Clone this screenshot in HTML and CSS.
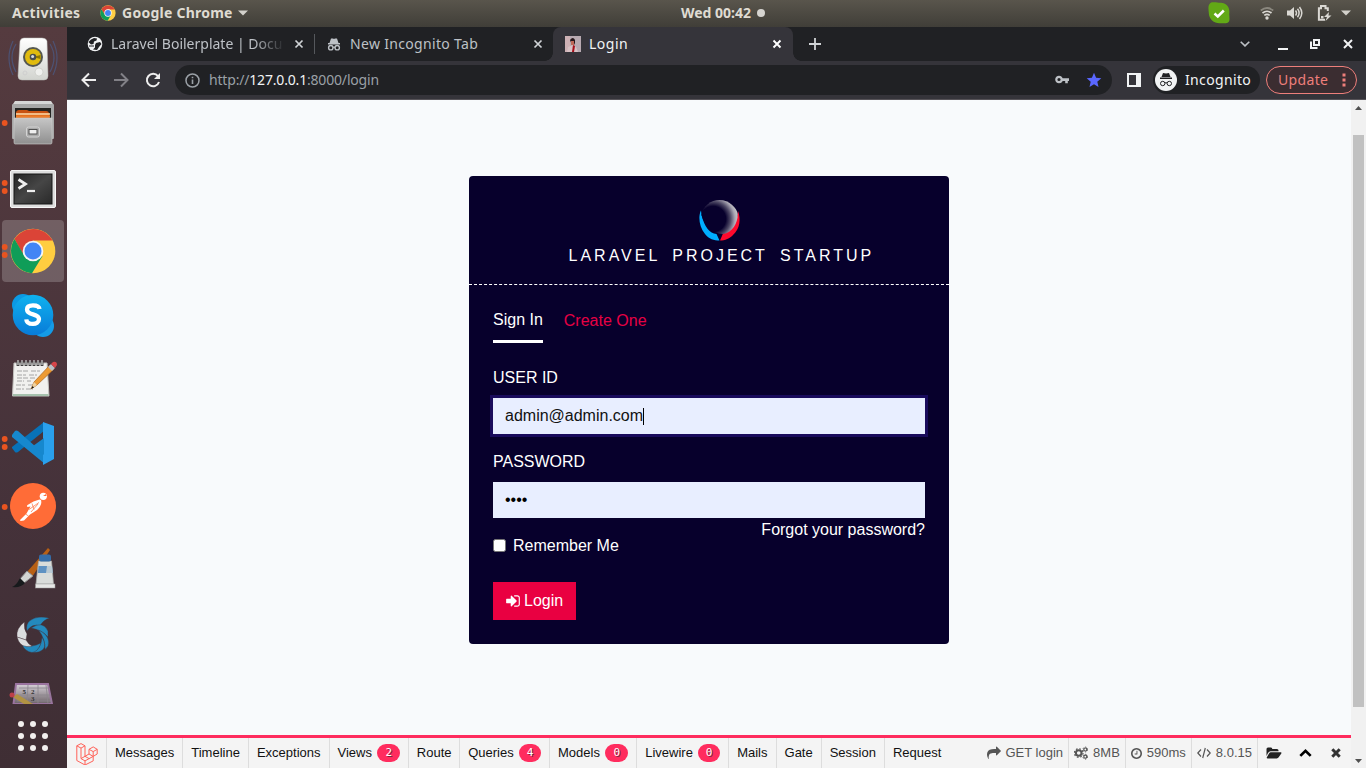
FILE: index.html
```html
<!DOCTYPE html>
<html lang="en">
<head>
<meta charset="utf-8">
<title>Login</title>
<link rel="stylesheet" href="styles.css">
</head>
<body>
<div class="desktop">
  <header class="topbar">
    <div class="top-left">
      <span class="activities">Activities</span>
      <svg class="mini-chrome" width="16" height="16" viewBox="0 0 46 46"><circle cx="23" cy="23" r="22" fill="#ffce44"/><path d="M4 12A22 22 0 0 1 42 12L42.500 13H23L14 28Z" fill="#db4437"/><path d="M4 12A22 22 0 0 0 22 45L32 28H14Z" fill="#0f9d58"/><circle cx="23" cy="23" r="10.500" fill="#fff"/><circle cx="23" cy="23" r="8.500" fill="#4285f4"/></svg>
      <span class="app-name">Google Chrome</span>
      <svg width="10" height="6" viewBox="0 0 10 6"><path d="M0 .5h10L5 5.500Z" fill="#d3d1cb"/></svg>
    </div>
    <div class="clock">Wed 00:42<i class="notice-dot"></i></div>
    <div class="tray">
      <svg width="22" height="22" viewBox="0 0 22 22"><path d="M3 .5C7-.5 10 1 13 .8 18 1 22 5 21.300 11c-.3 3 .8 6-.3 8.500-2 2.500-5 1.500-8 1.700C7 22 1 18 .8 11 .5 7-.5 3 3 .5Z" fill="#62a916"/><path d="m6.500 11.500 3.300 3 6-6" fill="none" stroke="#fff" stroke-width="2.500"/></svg>
      <svg class="wifi" width="14" height="14" viewBox="0 0 14 14" fill="none" stroke="#dad8d3" stroke-width="1.700"><path d="M.8 4.500q6.200-5 12.400 0" stroke="#8a877e"/><path d="M2.500 7q4.500-3.500 9 0M4.300 9.400q2.700-2.100 5.400 0"/><circle cx="7" cy="12" r="1.700" fill="#dad8d3" stroke="none"/></svg>
      <svg class="volume" width="16" height="14" viewBox="0 0 16 14" fill="none" stroke="#dad8d3" stroke-width="1.500"><path d="M0 4.500h3L7 1v12L3 9.500H0Z" fill="#dad8d3" stroke="none"/><path d="M8.500 4.500q2 2.500 0 5M10.500 2.800q3.200 4.200 0 8.400M12.500 1q4.600 6 0 12"/></svg>
      <svg class="battery" width="15" height="16" viewBox="0 0 15 16"><path d="M8 14.800H1.900V3.200H4V1h4.500v2.200h2.300V6" fill="none" stroke="#dad8d3" stroke-width="2"/><path d="M4 11h2.500v2.500H4Z" fill="#dad8d3"/><path d="m12 7-5 5h3l-1.500 4 6-5.500h-3Z" fill="#dad8d3"/></svg>
      <svg class="menu-arrow" width="10" height="6" viewBox="0 0 10 6"><path d="M0 .5h10L5 5.500Z" fill="#d3d1cb"/></svg>
    </div>
  </header>

  <div class="workspace">
    <nav class="dock">
      <div class="dock-list">
        <svg viewBox="0 0 67 64"><defs><linearGradient id="sp" x2="0" y2="1"><stop stop-color="#fff"/><stop offset="1" stop-color="#d2d4cf"/></linearGradient><linearGradient id="cab" x2="0" y2="1"><stop stop-color="#c6c6c6"/><stop offset="1" stop-color="#8f8f8f"/></linearGradient><linearGradient id="term" x2="1" y2="1"><stop stop-color="#252525"/><stop offset=".5" stop-color="#464646"/><stop offset="1" stop-color="#292929"/></linearGradient><linearGradient id="sky" x2="0" y2="1"><stop stop-color="#0fb2ef"/><stop offset="1" stop-color="#087bd8"/></linearGradient></defs>
          <g fill="none" stroke="#4d5273" stroke-width="1.200"><path d="M16 17q-8 13 0 28M13 14q-8 17 0 34M50 17q8 13 0 28M53 14q8 17 0 34"/></g>
          <path d="M20 14q1-3 4-3h18q4 0 5 3l1 35q0 4-4 4H22q-4 0-4-4Z" fill="url(#sp)" stroke="#bbbdb9" stroke-width=".5"/><circle cx="33" cy="30" r="10" fill="#555850"/><circle cx="33" cy="30" r="8" fill="#e0bb0e"/><path d="m33 30 7.500-2v4Z" fill="#8e7600"/><circle cx="33" cy="30" r="3.300" fill="#494d50"/><circle cx="32.600" cy="29.500" r="1.500" fill="#d8dde0"/><circle cx="39" cy="45" r="4" fill="#eff0ed" stroke="#c4c6c0" stroke-width=".6"/><circle cx="25" cy="46" r="2" fill="none" stroke="#cfcfcf"/></svg>
        <svg viewBox="0 0 67 64"><path d="M13 13 15 10h36l2 3Z" fill="#d6d6d6"/><rect x="12" y="13" width="42" height="35" rx="1" fill="#a7a7a7"/><rect x="15" y="17" width="36" height="10" fill="#242422"/><path d="M16 21q1-2 3-2h8l2 1h17q3 0 3 3v4H16Z" fill="#c85212"/><path d="M16 23h34" stroke="#ffe1af" stroke-width="1.500"/><path d="M16 25.500h34" stroke="#ed7d29" stroke-width="2.500"/><path d="M14 27h38v24q0 2-1 2H15q-1 0-1-2Z" fill="url(#cab)" stroke="#d0d0d0" stroke-width=".6"/><rect x="26.500" y="36" width="13" height="10" rx="2" fill="#aaa" stroke="#d3d3d3"/><rect x="29" y="38.500" width="8" height="4.500" fill="#eee" stroke="#515151"/><circle cx="4.700" cy="32" r="2.900" fill="#e95420"/></svg>
        <svg viewBox="0 0 67 64"><rect x="10.500" y="15.500" width="45" height="37" rx="1.500" fill="#dedede" stroke="#f7f7f7"/><rect x="14" y="19" width="38" height="30" fill="url(#term)" stroke="#161616"/><path d="m18.500 24.500 7 4.500-7 4.500" fill="none" stroke="#eee" stroke-width="2.700"/><path d="M27 36h8" stroke="#eee" stroke-width="2.200"/><g fill="#e95420"><circle cx="4.700" cy="28" r="2.900"/><circle cx="4.700" cy="36" r="2.900"/></g></svg>
        <svg viewBox="0 0 67 64"><rect x="2" y="1" width="62" height="62" rx="4" fill="#fff" fill-opacity=".2"/><circle cx="33" cy="32" r="22.300" fill="#ffcd40"/><path d="M14.500 20A22.300 22.300 0 0 1 52.600 21.500H33L24.500 38Z" fill="#db4437"/><path d="M14.500 20A22.300 22.300 0 0 0 32 54.200L42.500 37 25 38Z" fill="#0f9d58"/><circle cx="33" cy="32" r="10.300" fill="#f5f5f5"/><circle cx="33" cy="32" r="8.500" fill="#4285f4"/><g fill="#e95420"><circle cx="4.700" cy="28" r="2.900"/><circle cx="4.700" cy="36" r="2.900"/></g></svg>
        <svg viewBox="0 0 67 64"><circle cx="23" cy="22" r="11" fill="#0b9ae4"/><circle cx="43" cy="43" r="11" fill="#149be6"/><circle cx="33" cy="32" r="20.300" fill="url(#sky)"/><path d="M39.500 26c-.3-2.500-3.300-3.700-6.500-3.700-4 0-6 1.700-6 4.200 0 6.300 12 3.400 12 9.600 0 3.200-3 4.800-6 4.800-3.800 0-6.500-1.400-6.700-4.600" fill="none" stroke="#fff" stroke-width="4.300"/></svg>
        <svg viewBox="0 0 67 64"><path d="M14 16h33l2 33H12.500Z" fill="#f1f1ef" stroke="#c1c1bd"/><path d="M13 47h35.500v2H13Z" fill="#a6c1ad"/><g stroke="#a4a4a4" stroke-width="1"><path d="M17 24h12m2 0h9M17 28h9m3 0h8M17 31h11m2 0h5M17 34h7m3 0h4M16 38h9m3 0h5M16 42h8m2 0h7" stroke-dasharray="5 1"/></g><path d="M18 19v-5M22 19v-5M26 19v-5M30 19v-5M34 19v-5M38 19v-5M42 19v-5" stroke="#3f3f3f" stroke-width="2.800"/><path d="M18 18v-5M22 18v-5M26 18v-5M30 18v-5M34 18v-5M38 18v-5M42 18v-5" stroke="#eee"/><path d="m31 42 3-7L50 18l4 4-17 16Z" fill="#ed9b34" stroke="#aa651c" stroke-width=".7"/><path d="m31 42 3-7 3 3Z" fill="#eed2a1"/><path d="m31 42 1.500-3 1.500 1.500Z" fill="#111"/><path d="m48 20 3-3 4 4-3 3Z" fill="#b8bfc5"/><path d="m51 17 2-2q4-1 4 3l-2 3Z" fill="#d64549"/></svg>
        <svg viewBox="0 0 67 64"><path d="m12 37 3 4q1 1 3 0L44 20V11L12 36Z" fill="#0872b8"/><path d="M12 24l3-4q1-1 3 0l27 24v9L12 26Z" fill="#1688ce"/><path d="m43 11 11 4v33l-11 6Z" fill="#2aa0ec"/><path d="M33 35l11 9V27Z" fill="#1688ce"/><g fill="#e95420"><circle cx="4.700" cy="28" r="2.900"/><circle cx="4.700" cy="36" r="2.900"/></g></svg>
        <svg viewBox="0 0 67 64"><circle cx="33" cy="31" r="23" fill="#ff6c37"/><circle cx="43.300" cy="21.300" r="3.600" fill="#fff"/><path d="m43 21 3-2 .5 2Z" fill="#ff6c37"/><path d="M39.500 24.500q-6 1-12 5.500-1 1 0 2l3-.5-4 7-6.500 6.500.5 1 3.500-.5 6-6 4-2.500q4-2 6-5.500 2-3 1-6.500Z" fill="#fff"/><path d="m29 34.500 10-7M31 37l7-8M32 28.500l2 6M25.500 39l3 2" fill="none" stroke="#ff6c37" stroke-width=".7"/><circle cx="4.700" cy="32" r="2.900" fill="#e95420"/></svg>
        <svg viewBox="0 0 67 64"><path d="m27 33 21-24 2 2-18 27Z" fill="#b86014"/><path d="m20 40 7-8 6 5-9 7Z" fill="#d3d5d2" stroke="#8c8c8c"/><path d="m20 39 5 5q-4 5-13 4 4-1 8-9Z" fill="#171a1c"/><path d="M38.500 22h13l2 23H36Z" fill="#d9dcda" stroke="#a7aaa8" stroke-width=".7"/><rect x="39" y="15.500" width="12" height="7" rx="2" fill="#356da8"/><path d="M38.500 27h13.500l.7 7H38Z" fill="#5e91c2"/><path d="m47 27 5 0 .7 7h-6.700Z" fill="#b9c9d3"/><rect x="35.500" y="45" width="19.500" height="4" fill="#e6e7e6" stroke="#9a9a9a" stroke-width=".5"/></svg>
        <svg viewBox="0 0 67 64"><g fill="#2389bd" stroke="#433037" stroke-width=".4"><path d="M27 28Q25.500 21 30 17.500 38 12 49.500 15.300 43 17 40 23q-8-3-13 5Z"/><path d="M31 25q12-8 17 3v6q-6-7-17-9Z"/><path d="M38.500 27q9 4 10 11 1 5-3.500 8.500.5-10-6.500-19.500Z"/><path d="M42 34q4.500 8 1.500 12-4 4-11 3.500 9-4 9.500-15.500Z"/><path d="M41 40q-3 9-9 9.500-7-1-10-8 9 4 19-1.500Z"/></g><g fill="#dcdedf" stroke="#433037" stroke-width=".4"><path d="M24.500 19q-1 7 2.500 12l-1 6-9-3q-1-9 7.500-15Z"/><path d="M17 34 26 37q2 4 6 6-12 3-15-9Z"/></g></svg>
        <svg viewBox="0 0 67 64"><defs><linearGradient id="fade" x2="0" y2="1"><stop stop-color="#d6d0d7"/><stop offset="1" stop-color="#6c6268"/></linearGradient></defs><path d="M16 17h32l4 20H13.500Z" fill="url(#fade)" stroke="#9a739f" stroke-width="2"/><path d="M19 21h30M18 28h33M17 34h35M28 18l-1 19M38 18v19M46 18l2 19" stroke="#8c858d" fill="none" stroke-width=".8"/><g class="dock-digits"><text x="22.500" y="27">5</text><text x="31" y="27">2</text><text x="31" y="33.500">3</text></g><path d="m13 30 4-3 16 10H24Z" fill="#b19343"/><circle cx="12" cy="28" r="2.500" fill="#bd4048"/></svg>
      </div>
      <svg class="apps-grid" viewBox="0 0 67 64"><g fill="#f2f0ef"><circle cx="21" cy="20" r="3"/><circle cx="33" cy="20" r="3"/><circle cx="45" cy="20" r="3"/><circle cx="21" cy="32" r="3"/><circle cx="33" cy="32" r="3"/><circle cx="45" cy="32" r="3"/><circle cx="21" cy="44" r="3"/><circle cx="33" cy="44" r="3"/><circle cx="45" cy="44" r="3"/></g></svg>
    </nav>

    <section class="browser">
      <div class="tabs">
        <div class="tab tab-docs">
          <svg width="16" height="16" viewBox="0 0 16 16"><circle cx="8" cy="8" r="7.300" fill="#f1f3f4"/><path d="M4 3.500 7 2l3 .5-.5 2L7 5.500 6.500 8 4 8.500 1.500 6ZM9 7l4-1 1.500 2L12 11l-2 3-4-.5 2-2V9Z" fill="#202124"/><path d="M2 10h5" stroke="#202124"/></svg>
          <span class="tab-title fading">Laravel Boilerplate | Docu</span>
          <svg class="close" width="10" height="10" viewBox="0 0 10 10"><path d="m1.500 1.500 7 7m0-7-7 7"/></svg>
        </div>
        <div class="tab tab-incognito">
          <svg width="14" height="14" viewBox="0 0 14 14"><path d="M4 1.500h2l1 .5 1-.5h2L11.500 6h-9ZM1 6h12v1.500H1Z" fill="#bdc1c6"/><g fill="none" stroke="#bdc1c6" stroke-width="1.400"><circle cx="3.800" cy="10.700" r="2.200"/><circle cx="10.200" cy="10.700" r="2.200"/><path d="M6 10.500q1-.7 2 0"/></g></svg>
          <span class="tab-title">New Incognito Tab</span>
          <svg class="close" width="10" height="10" viewBox="0 0 10 10"><path d="m1.500 1.500 7 7m0-7-7 7"/></svg>
        </div>
        <div class="tab tab-active">
          <svg width="16" height="16" viewBox="0 0 16 16"><path d="M0 0h16v16H0Z" fill="#b8aab1"/><path d="M0 0h5v16H0Z" fill="#ceb1b5"/><path d="M5 4q3-4 5 0v3l-1 2H7Z" fill="#27171b"/><path d="M6 5h3v4H6Z" fill="#bd6857"/><path d="m3 11 5-2 3 2 2 5H2Z" fill="#d8c1c4"/><path d="m8 9 2 1-1 6H7Z" fill="#a50e19"/></svg>
          <span class="tab-title">Login</span>
          <svg class="close" width="10" height="10" viewBox="0 0 10 10"><path d="m1.500 1.500 7 7m0-7-7 7"/></svg>
        </div>
        <svg class="new-tab" width="12" height="12" viewBox="0 0 12 12"><path d="M6 0v12M0 6h12"/></svg>
        <div class="window-controls">
          <svg width="10" height="6" viewBox="0 0 10 6"><path d="m.7.700 4.300 4.200L9.300.700" stroke="#bdc1c6" stroke-width="1.600"/></svg>
          <svg class="minimize" width="10" height="2" viewBox="0 0 10 2"><path d="M0 1h10" stroke-width="2"/></svg>
          <svg class="restore" width="10" height="10" viewBox="0 0 10 10"><path d="M4 1h5v5H4ZM1 2.500V9h6.500" stroke-width="2"/></svg>
          <svg class="win-close" width="10" height="10" viewBox="0 0 10 10"><path d="m1 1 8 8m0-8-8 8" stroke-width="2"/></svg>
        </div>
      </div>

      <div class="toolbar">
        <div class="nav-icons">
          <svg width="16" height="16" viewBox="0 0 16 16"><path d="M15 8H2m6-6.500L1.500 8 8 14.500"/></svg>
          <svg class="dim" width="16" height="16" viewBox="0 0 16 16"><path d="M1 8h13M8 1.500 14.500 8 8 14.500"/></svg>
          <svg width="16" height="16" viewBox="0 0 16 16"><path d="M13 4.200A6.200 6.200 0 1 0 14 10"/><path d="M15 1v6H9Z" fill="#eee" stroke="none"/></svg>
        </div>
        <div class="omnibox">
          <svg width="15" height="15" viewBox="0 0 15 15"><circle cx="7.500" cy="7.500" r="6.500" fill="none" stroke="#9aa0a6" stroke-width="1.500"/><path d="M7.500 6.500v4.500M7.500 3.800v1.500" stroke="#9aa0a6" stroke-width="1.600"/></svg>
          <span class="url">http://<b>127.0.0.1</b>:8000/login</span>
          <svg class="key" width="14" height="10" viewBox="0 0 14 10"><circle cx="4" cy="4.500" r="2.700" fill="none" stroke="#bdc1c6" stroke-width="2.200"/><path d="M7 3.200h7v2.700h-1.200v2.300h-2.600V5.900H7Z" fill="#bdc1c6"/></svg>
          <svg class="star" width="16" height="16" viewBox="0 0 16 16"><path d="m8 .8 2.100 4.900 5.200.5-4 3.500 1.200 5.200L8 12.200l-4.500 2.700 1.200-5.200-4-3.500 5.200-.5Z" fill="#5a67ff"/></svg>
        </div>
        <svg class="side-panel" width="14" height="14" viewBox="0 0 14 14"><path d="M0 0h14v14H0Z" fill="#f1f3f4"/><path d="M2 2h7v10H2Z" fill="#35343a"/></svg>
        <div class="incognito">
          <svg width="22" height="22" viewBox="0 0 22 22"><circle cx="11" cy="11" r="11" fill="#f1f3f4"/><path d="m8 4 3 .6L14 4l1.500 4h-9ZM5 8.500h12V10H5Z" fill="#202124"/><g fill="none" stroke="#202124"><circle cx="7.700" cy="14.500" r="2.200"/><circle cx="14.300" cy="14.500" r="2.200"/><path d="M10 14q1-.7 2 0"/></g></svg>
          <span>Incognito</span>
        </div>
        <div class="update"><span>Update</span><svg width="4" height="14" viewBox="0 0 4 14"><path d="M.5.500h3v3h-3Zm0 5h3v3h-3Zm0 5h3v3h-3Z" fill="#ee7f7b"/></svg></div>
      </div>

      <div class="viewport">
        <div class="page">
          <main class="stage">
            <form class="card">
              <div class="card-head">
                <svg class="brand" width="42" height="42" viewBox="0 0 42 42"><defs><radialGradient id="orb" gradientUnits="userSpaceOnUse" cx="14" cy="19" r="25.500"><stop offset=".5" stop-color="#07002c"/><stop offset=".68" stop-color="#4c4764"/><stop offset=".86" stop-color="#aaa7b3"/><stop offset="1" stop-color="#ccc"/></radialGradient></defs><path d="M2 10.500C-1 16 0 27 6 34c4 5 9 6.500 14.500 6.500L17.500 34Q7 33 2.500 15Z" fill="#00aeff"/><path d="M39 11c3 8 2 18-5 24-3 3.500-8 5.500-13 5.500l3-7c8-1 14-10 15-22.500Z" fill="#ff0a2d"/><path d="M2.500 15C4 6 12 0 20.500 0 30 0 38 8 38.700 14 39 23 33 33 24 34 13 34 5 24 2.500 15Z" fill="url(#orb)"/></svg>
                <h1>LARAVEL PROJECT STARTUP</h1>
              </div>
              <div class="card-body">
                <div class="auth-tabs"><a class="current">Sign In</a><a class="create">Create One</a></div>
                <label>USER ID</label>
                <div class="field focused">admin@admin.com<i class="caret"></i></div>
                <label class="second">PASSWORD</label>
                <div class="field"><span class="mask">••••</span></div>
                <a class="forgot">Forgot your password?</a>
                <div class="remember"><i class="checkbox"></i>Remember Me</div>
                <div class="login"><svg width="16" height="16" viewBox="0 0 1792 1792" fill="#fff"><path d="M1312 896q0 26-19 45l-544 544q-19 19-45 19t-45-19-19-45v-288h-448q-26 0-45-19t-19-45v-384q0-26 19-45t45-19h448v-288q0-26 19-45t45-19 45 19l544 544q19 19 19 45zm352-352v704q0 119-84.500 203.500t-203.500 84.500h-320q-13 0-22.500-9.500t-9.500-22.500q0-4-1-20t-.5-26.500 3-23.500 10-19.500 20.500-6.500h320q66 0 113-47t47-113v-704q0-66-47-113t-113-47h-312l-11.500-1-11.500-3-8-5.500-7-9-2-13.500q0-4-1-20t-.5-26.500 3-23.500 10-19.500 20.500-6.500h320q119 0 203.500 84.500t84.500 203.500z"/></svg><span>Login</span></div>
              </div>
            </form>
          </main>
          <footer class="debugbar">
            <div class="logo-cell"><svg width="22" height="22" viewBox="0 0 22 22" fill="none" stroke="#ff6259" stroke-width="1"><path d="M.8 2.800 5 .6l4 2.200v10.500l4-2.300V6.300l4.200-2.400 4 2.400V11l-4 2.400v4.500L9 22 .8 17.500ZM.8 2.800 5 5.100l4-2.300M5 5.100v10.500l4 2.300 8.200-4.500M5 15.600l4-2.300M9 18v4M13 6.300l4.200 2.300 4-2.300M17.200 8.600v4.800M13 11l4.200 2.400M9 13.300l4.200 2.400"/></svg></div>
            <div class="cell">Messages</div><div class="cell">Timeline</div><div class="cell">Exceptions</div>
            <div class="cell">Views<b class="badge wide">2</b></div><div class="cell tight">Route</div>
            <div class="cell">Queries<b class="badge">4</b></div><div class="cell">Models<b class="badge wide">0</b></div><div class="cell">Livewire<b class="badge">0</b></div>
            <div class="cell">Mails</div><div class="cell">Gate</div><div class="cell">Session</div><div class="cell last">Request</div>
            <div class="stats">
              <div class="stat"><svg width="14" height="14" viewBox="0 0 1792 1792"><path d="M1792 640q0 26-19 45l-512 512q-19 19-45 19t-45-19-19-45v-256h-224q-98 0-175.500 6t-154 21.500-133 42.500-105.500 69.500-80 101-48.500 138.500-17.500 181q0 55 5 123 0 6 2.500 23.500t2.500 26.500q0 15-8.500 25t-23.500 10q-16 0-28-17-7-9-13-22t-13.500-30-10.500-24q-127-285-127-451 0-199 53-333 162-403 875-403h224v-256q0-26 19-45t45-19 45 19l512 512q19 19 19 45z"/></svg>GET login</div>
              <div class="stat"><svg width="14" height="14" viewBox="0 0 14 14"><g fill="none" stroke="#555"><circle cx="4.700" cy="7" r="2.800" stroke-width="2"/><circle cx="4.700" cy="7" r="4.300" stroke-width="1.200" stroke-dasharray="1.700 1.680"/><circle cx="11.300" cy="3.500" r="1.500" stroke-width="1.200"/><circle cx="11.300" cy="3.500" r="2.400" stroke-width="1" stroke-dasharray="1.200 1.310"/><circle cx="11.300" cy="10.700" r="1.500" stroke-width="1.200"/><circle cx="11.300" cy="10.700" r="2.400" stroke-width="1" stroke-dasharray="1.200 1.310"/></g></svg>8MB</div>
              <div class="stat"><svg width="11" height="11" viewBox="128 128 1536 1536"><path d="M1024 544v448q0 14-9 23t-23 9h-320q-14 0-23-9t-9-23v-64q0-14 9-23t23-9h224v-352q0-14 9-23t23-9h64q14 0 23 9t9 23zm416 352q0-148-73-273t-198-198-273-73-273 73-198 198-73 273 73 273 198 198 273 73 273-73 198-198 73-273zm224 0q0 209-103 385.500t-279.500 279.500-385.500 103-385.500-103-279.500-279.500-103-385.500 103-385.500 279.500-279.500 385.500-103 385.500 103 279.500 279.500 103 385.500z"/></svg>590ms</div>
              <div class="stat"><svg width="14" height="12" viewBox="0 0 14 12"><path d="M4 2.500.8 6 4 9.500M10 2.500 13.200 6 10 9.500M8.300 1 5.700 11" fill="none" stroke="#555" stroke-width="1.200"/></svg>8.0.15</div>
              <div class="bar-actions">
                <svg width="16" height="12" viewBox="0 0 16 12"><path d="M.5 9V2Q.5.500 2 .5h3q1.300 0 1.300 1.500H11q1.500 0 1.500 1.500v.8H4.500Q3 4.300 2 6Z" fill="#222"/><path d="M4.800 5.300h10q1.200 0 .5 1.200l-2.600 3.800q-.7 1.100-2 1.100h-9q-1.600 0-.7-1.300L3 6.600q.8-1.300 1.800-1.300Z" fill="#222"/></svg>
                <svg class="expand" width="13" height="8" viewBox="0 0 13 8"><path d="m1.300 6.900 5.200-5 5.200 5" fill="none" stroke="#000" stroke-width="2.700"/></svg>
                <svg width="10" height="10" viewBox="0 0 10 10"><path d="m1.300 1.300 7.400 7.400m0-7.400-7.400 7.400" stroke="#333" stroke-width="3"/></svg>
              </div>
            </div>
          </footer>
        </div>
        <div class="scrollbar"><svg width="7" height="4" viewBox="0 0 7 4"><path d="M0 4h7L3.500 0Z" fill="#505050"/></svg><i class="thumb"></i><svg width="7" height="4" viewBox="0 0 7 4"><path d="M0 0h7L3.500 4Z" fill="#505050"/></svg></div>
      </div>
    </section>
  </div>
</div>
</body>
</html>
```

FILE: styles.css
```css
* { box-sizing: border-box; }
body { margin: 0; font-family: "Liberation Sans", Arial, sans-serif; }
svg { display: block; flex: none; }
.desktop { width: 1366px; height: 768px; display: flex; flex-direction: column; overflow: hidden; }

/* System bar */
.topbar { height: 27px; flex: none; padding-bottom: 1px; display: flex; align-items: center; background: linear-gradient(#59554c, #403e38); color: #dfdbd2; font: 700 14px/26px "Noto Sans", sans-serif; }
.top-left { width: 681px; display: flex; align-items: center; padding-left: 12px; }
.activities { width: 88px; white-space: nowrap; letter-spacing: .35px; }
.app-name { width: 112px; margin: 0 4px 0 6px; white-space: nowrap; letter-spacing: .25px; }
.clock { display: flex; align-items: center; width: 84px; white-space: nowrap; letter-spacing: 0; }
.notice-dot { width: 8px; height: 8px; margin-left: auto; border-radius: 50%; background: #d6d4d0; }
.tray { margin-left: auto; display: flex; align-items: center; padding-right: 15px; }
.wifi { margin-left: 30px; }
.volume { margin-left: 13px; }
.battery { margin-left: 14px; }
.menu-arrow { margin-left: 9px; }

/* Dock */
.workspace { flex: 1; min-height: 0; display: flex; }
.dock { width: 67px; flex: none; background: linear-gradient(#553b3f, #45323a 65%, #3f2e34); }
.dock-list { height: 677px; overflow: hidden; }
.dock-list svg, .apps-grid { width: 67px; height: 64px; }
.dock-digits { font: bold 7px "Liberation Serif", serif; fill: #333; }

/* Tab strip */
.browser { flex: 1; min-width: 0; display: flex; flex-direction: column; font-family: "Noto Sans", sans-serif; }
.tabs { height: 34px; flex: none; display: flex; background: #202124; color: #bdc1c6; font-size: 14px; }
.tab { display: flex; align-items: center; position: relative; }
.tab-title { white-space: nowrap; overflow: hidden; margin-left: 8px; line-height: 20px; }
.tab .close { margin-left: auto; }
.close path { stroke: #d0d3d6; stroke-width: 1.7; }
.tab-docs { width: 248px; padding: 0 10px 0 20px; border-right: 1px solid transparent; }
.tab-docs::after { content: ""; position: absolute; right: -1px; top: 7px; width: 1px; height: 20px; background: #55585c; }
.fading { width: 174px; -webkit-mask-image: linear-gradient(90deg, #000 82%, transparent); mask-image: linear-gradient(90deg, #000 82%, transparent); }
.tab-incognito { width: 238px; padding: 0 10px 0 12px; }
.tab-incognito .tab-title { margin-left: 9px; letter-spacing: .32px; }
.tab-active { width: 240px; padding: 0 11px 0 12px; background: #35343a; color: #f1f3f4; border-radius: 8px 8px 0 0; letter-spacing: .5px; }
.tab-active::before, .tab-active::after { content: ""; position: absolute; bottom: 0; width: 8px; height: 8px; }
.tab-active::before { left: -8px; background: radial-gradient(circle at 0 0, transparent 7.5px, #35343a 8px); }
.tab-active::after { right: -8px; background: radial-gradient(circle at 100% 0, transparent 7.5px, #35343a 8px); }
.tab-active .close path { stroke: #fff; stroke-width: 1.9; }
.new-tab { margin: 11px 0 0 16px; }
.new-tab path { stroke: #d0d3d6; stroke-width: 1.8; }
.window-controls { margin-left: auto; padding-right: 13px; display: flex; align-items: center; fill: none; stroke: #f1f3f4; }
.minimize { margin: 9px 0 0 28px; }
.restore { margin-left: 22px; }
.win-close { margin-left: 23px; }

/* Toolbar */
.toolbar { height: 39px; flex: none; display: flex; align-items: center; background: #35343a; border-bottom: 1px solid #565358; font-size: 14px; color: #f1f3f4; }
.toolbar span { padding-bottom: 2px; }
.nav-icons { display: flex; gap: 16px; margin-left: 14px; fill: none; stroke: #eee; stroke-width: 2; }
.nav-icons .dim { stroke: #828187; }
.omnibox { width: 937px; height: 30px; margin-left: 14px; padding: 0 10px 0 10px; border-radius: 15px; background: #202124; display: flex; align-items: center; }
.url { margin-left: 9px; color: #9aa0a6; white-space: nowrap; letter-spacing: -.18px; }
.url b { font-weight: 400; color: #f1f3f4; }
.key { margin-left: auto; }
.star { margin-left: 17px; }
.side-panel { margin-left: 15px; }
.incognito { width: 107px; height: 28px; margin-left: 12px; padding-left: 2px; border-radius: 14px; background: #202124; display: flex; align-items: center; gap: 8px; letter-spacing: .35px; }
.update { width: 91px; height: 28px; margin-left: 6px; padding: 0 10px 0 11px; border: 1px solid #ee7f7b; border-radius: 14px; background: #3b2d31; color: #ee7f7b; display: flex; align-items: center; justify-content: space-between; letter-spacing: .35px; }

/* Page */
.viewport { flex: 1; min-height: 0; display: flex; font-family: "Liberation Sans", Arial, sans-serif; }
.page { flex: 1; min-width: 0; display: flex; flex-direction: column; background: #f8fafc; }
.stage { flex: 1; display: flex; justify-content: center; align-items: flex-start; padding-top: 76px; }
.card { width: 480px; height: 468px; border-radius: 4px; background: #07002c; color: #fff; font-size: 16px; line-height: 24px; }
.card-head { height: 109px; padding-top: 24px; border-bottom: 1px dashed #fff; }
.brand { margin-left: 230px; }
.card-head h1 { margin: 2px 0 0 99.5px; font-size: 16px; font-weight: 400; letter-spacing: 3px; word-spacing: 5px; white-space: nowrap; }
.card-body { padding: 23px 24px 0; display: flex; flex-direction: column; }
.auth-tabs { display: flex; align-items: flex-start; gap: 21px; }
.current { height: 35px; border-bottom: 3px solid #fff; }
.create { color: #e60044; padding-top: 1px; }
.card-body label { margin-top: 23px; }
.card-body .second { margin-top: 16px; }
.field { height: 36px; margin-top: 8px; padding: 6px 12px; background: #e8eeff; color: #111; display: flex; align-items: center; }
.focused { box-shadow: 0 0 0 3px #190b5c; }
.caret { width: 1px; height: 17px; background: #000; }
.mask { font-size: 16px; color: #000; }
.forgot { align-self: flex-end; }
.remember { display: flex; align-items: center; margin-top: -8px; gap: 7px; }
.checkbox { width: 13px; height: 13px; margin-bottom: 2px; border: 1px solid #767676; border-radius: 2.5px; background: #fff; }
.login { width: 83px; height: 38px; margin-top: 24px; padding-left: 12px; background: #e90041; display: flex; align-items: center; gap: 3px; }

/* Debug bar */
.debugbar { height: 33px; flex: none; border-top: 3px solid #ff2c5e; background: #f4f4f4; display: flex; color: #111; font-size: 13px; line-height: 30px; white-space: nowrap; }
.logo-cell { width: 40px; padding: 5px 0 0 9px; border-right: 1px solid #ddd; }
.cell { padding: 0 8px; border-right: 1px solid #ddd; display: flex; align-items: center; }
.tight { padding: 0 7.6px; }
.last { border-right: 0; }
.badge { width: 22px; height: 18px; margin-left: 5.3px; border-radius: 9px; background: #ff2c5e; color: #fff; font: 400 11px/18px "DejaVu Sans Mono", monospace; text-align: center; text-shadow: 1px 1px 0 #7c2440; }
.wide { width: 23px; }
.stats { margin-left: auto; display: flex; color: #555; }
.stat { padding: 0 5px; border-right: 1px solid #ddd; display: flex; align-items: center; gap: 5px; fill: #555; }
.bar-actions { width: 93px; padding: 0 10px 0 8px; display: flex; align-items: center; justify-content: space-between; }
.expand { margin-right: 3px; }

/* Scrollbar */
.scrollbar { width: 15px; flex: none; padding: 6px 0 5px; background: #f1f1f1; display: flex; flex-direction: column; align-items: center; justify-content: space-between; }
.thumb { width: 11px; height: 572px; margin-bottom: 27px; background: #c1c1c1; }
```
